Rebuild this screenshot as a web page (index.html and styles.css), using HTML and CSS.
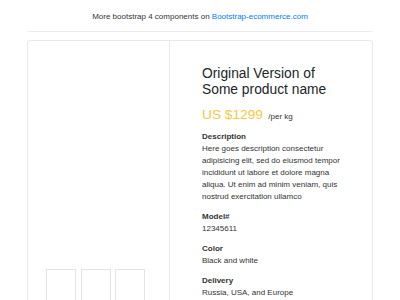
FILE: index.html
```html
<!DOCTYPE html>
<html lang="en">
<head>
    <meta charset="UTF-8">
    <meta name="viewport" content="width=device-width, initial-scale=1.0">
    <title>Product detail</title>
    <link rel="stylesheet" href="styles.css">
</head>
<body>
    <div class="container">
        <p class="promo">More bootstrap 4 components on <a href="#">Bootstrap-ecommerce.com</a></p>
        <hr>
        <div class="card">
            <div class="gallery">
                <div class="img-big"></div>
                <div class="thumbs">
                    <a href="#" class="thumb"></a>
                    <a href="#" class="thumb"></a>
                    <a href="#" class="thumb"></a>
                </div>
            </div>
            <div class="info">
                <h3 class="title">Original Version of Some product name</h3>
                <p class="price-box">
                    <span class="price">US $1299</span>
                    <span class="unit">/per kg</span>
                </p>
                <dl class="item-property">
                    <dt>Description</dt>
                    <dd>Here goes description consectetur adipisicing elit, sed do eiusmod tempor incididunt ut labore et dolore magna aliqua. Ut enim ad minim veniam, quis nostrud exercitation ullamco</dd>
                </dl>
                <dl class="item-property">
                    <dt>Model#</dt>
                    <dd>12345611</dd>
                </dl>
                <dl class="item-property">
                    <dt>Color</dt>
                    <dd>Black and white</dd>
                </dl>
                <dl class="item-property">
                    <dt>Delivery</dt>
                    <dd>Russia, USA, and Europe</dd>
                </dl>
            </div>
        </div>
    </div>
</body>
</html>
```
FILE: styles.css
```css
body {
    margin: 0;
    font-family: "Liberation Sans", Arial, sans-serif;
    color: #333;
    background: #fff;
}
.container {
    padding: 0 27px;
}
.promo {
    margin: 0;
    padding-top: 11px;
    text-align: center;
    font-size: 8px;
    line-height: 12px;
}
.promo a {
    color: #007bff;
    text-decoration: none;
}
hr {
    margin: 8px 0 8px;
    border: 0;
    border-top: 1px solid #ececec;
}
.card {
    display: grid;
    grid-template-columns: 142px 1fr;
    border: 1px solid #e9e9e9;
    border-radius: 3px;
    height: 280px;
}
.gallery {
    border-right: 1px solid #e9e9e9;
    padding: 14px 0 0 18px;
}
.img-big {
    height: 214px;
}
.thumbs {
    display: flex;
    gap: 4.5px;
}
.thumb {
    display: block;
    width: 28px;
    height: 30px;
    border: 1px solid #e4e4e4;
}
.info {
    padding: 24.5px 24px 0 32px;
}
.title {
    margin: 0 0 8px;
    font-size: 13.8px;
    font-weight: normal;
    line-height: 16px;
    color: #212529;
}
.price-box {
    margin: 0 0 6.5px;
    line-height: 16px;
}
.price {
    color: #f5c842;
    font-size: 13.7px;
}
.unit {
    font-size: 8px;
    margin-left: 1px;
}
.item-property {
    margin: 0 0 8px;
    font-size: 8px;
    line-height: 12px;
}
.item-property dt {
    font-weight: bold;
}
.item-property dd {
    margin: 0;
}
```
